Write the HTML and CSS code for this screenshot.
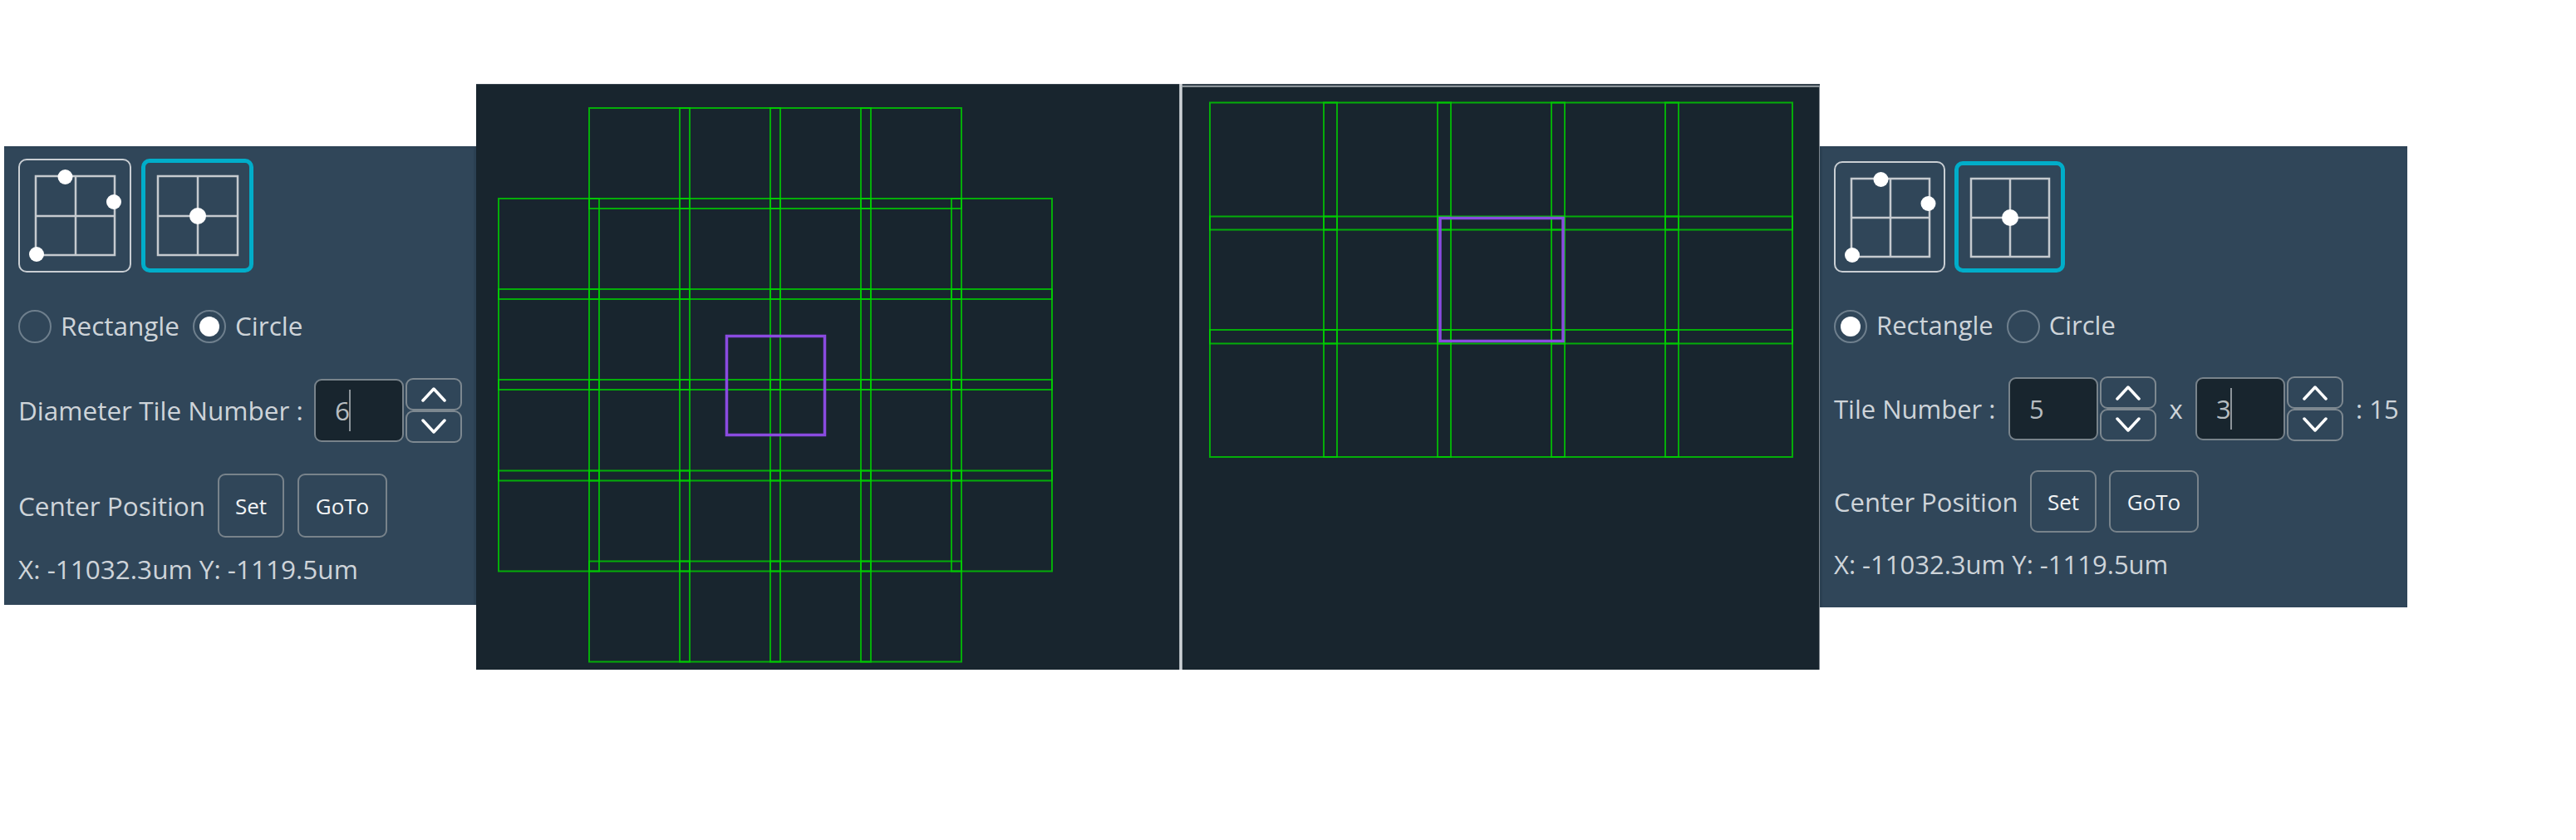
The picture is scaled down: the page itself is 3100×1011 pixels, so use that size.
FILE: index.html
```html
<!DOCTYPE html>
<html lang="en">
<head>
<meta charset="utf-8">
<title>Tile scan</title>
<link rel="stylesheet" href="styles.css">
</head>
<body>
<div class="stage">
  <section class="panel panel-a">
    <div class="icons">
      <div class="icon-btn">
        <svg viewBox="0 0 136 137"><g class="g"><rect x="21" y="21" width="95" height="95"/><path d="M69 21V116M21 69H116"/></g><circle cx="56.500" cy="22" r="9"/><circle cx="115" cy="52" r="9"/><circle cx="22" cy="115" r="9"/></svg>
      </div>
      <div class="icon-btn on">
        <svg viewBox="0 0 135 137"><g class="g"><rect x="20" y="21" width="96" height="95"/><path d="M68 21V116M20 69H116"/></g><circle cx="68" cy="69" r="10"/></svg>
      </div>
    </div>
    <div class="radios">
      <span class="radio"></span><span class="radio-text">Rectangle</span>
      <span class="radio on"></span><span class="radio-text">Circle</span>
    </div>
    <div class="spin-row">
      <span class="label">Diameter Tile Number :</span>
      <div class="num"><span>6</span><i class="caret"></i></div>
      <div class="spin">
        <div class="step"><svg viewBox="0 0 30 19"><path d="M2 17 15 3 28 17"/></svg></div>
        <div class="step"><svg viewBox="0 0 30 19"><path d="M2 2 15 16 28 2"/></svg></div>
      </div>
    </div>
    <div class="pos-row">
      <span class="label">Center Position</span>
      <div class="btn set">Set</div>
      <div class="btn goto">GoTo</div>
    </div>
    <div class="coords">X: -11032.3um Y: -1119.5um</div>
  </section>

  <div class="view view-a">
    <svg viewBox="573 101 846 705">
      <g class="tiles">
        <rect x="709" y="130" width="121" height="121"/><rect x="818" y="130" width="121" height="121"/><rect x="927" y="130" width="121" height="121"/><rect x="1036" y="130" width="121" height="121"/>
        <rect x="600" y="239" width="121" height="121"/><rect x="709" y="239" width="121" height="121"/><rect x="818" y="239" width="121" height="121"/><rect x="927" y="239" width="121" height="121"/><rect x="1036" y="239" width="121" height="121"/><rect x="1145" y="239" width="121" height="121"/>
        <rect x="600" y="348" width="121" height="121"/><rect x="709" y="348" width="121" height="121"/><rect x="818" y="348" width="121" height="121"/><rect x="927" y="348" width="121" height="121"/><rect x="1036" y="348" width="121" height="121"/><rect x="1145" y="348" width="121" height="121"/>
        <rect x="600" y="457" width="121" height="121.500"/><rect x="709" y="457" width="121" height="121.500"/><rect x="818" y="457" width="121" height="121.500"/><rect x="927" y="457" width="121" height="121.500"/><rect x="1036" y="457" width="121" height="121.500"/><rect x="1145" y="457" width="121" height="121.500"/>
        <rect x="600" y="566.500" width="121" height="121"/><rect x="709" y="566.500" width="121" height="121"/><rect x="818" y="566.500" width="121" height="121"/><rect x="927" y="566.500" width="121" height="121"/><rect x="1036" y="566.500" width="121" height="121"/><rect x="1145" y="566.500" width="121" height="121"/>
        <rect x="709" y="675.500" width="121" height="121"/><rect x="818" y="675.500" width="121" height="121"/><rect x="927" y="675.500" width="121" height="121"/><rect x="1036" y="675.500" width="121" height="121"/>
      </g>
      <rect class="cur" x="874.500" y="404.500" width="118" height="119"/>
    </svg>
  </div>
  <div class="splitter"></div>
  <div class="view view-b">
    <svg viewBox="1423 101 767 705">
      <g class="tiles">
        <rect x="1456" y="123.500" width="153" height="153"/><rect x="1593" y="123.500" width="153" height="153"/><rect x="1730" y="123.500" width="153" height="153"/><rect x="1867" y="123.500" width="153" height="153"/><rect x="2004" y="123.500" width="153" height="153"/>
        <rect x="1456" y="260.500" width="153" height="153"/><rect x="1593" y="260.500" width="153" height="153"/><rect x="1730" y="260.500" width="153" height="153"/><rect x="1867" y="260.500" width="153" height="153"/><rect x="2004" y="260.500" width="153" height="153"/>
        <rect x="1456" y="397" width="153" height="153"/><rect x="1593" y="397" width="153" height="153"/><rect x="1730" y="397" width="153" height="153"/><rect x="1867" y="397" width="153" height="153"/><rect x="2004" y="397" width="153" height="153"/>
      </g>
      <rect class="cur" x="1733" y="262.500" width="148" height="148"/>
    </svg>
  </div>

  <section class="panel panel-b">
    <div class="icons">
      <div class="icon-btn">
        <svg viewBox="0 0 134 134"><g class="g"><rect x="21" y="21" width="94" height="94"/><path d="M68 21V115M21 68H115"/></g><circle cx="56.500" cy="22" r="9"/><circle cx="113.500" cy="51" r="9"/><circle cx="22" cy="113" r="9"/></svg>
      </div>
      <div class="icon-btn on">
        <svg viewBox="0 0 133 134"><g class="g"><rect x="20" y="21" width="94" height="94"/><path d="M67 21V115M20 68H114"/></g><circle cx="67" cy="68" r="10"/></svg>
      </div>
    </div>
    <div class="radios">
      <span class="radio on"></span><span class="radio-text">Rectangle</span>
      <span class="radio"></span><span class="radio-text">Circle</span>
    </div>
    <div class="spin-row">
      <span class="label">Tile Number :</span>
      <div class="num"><span>5</span></div>
      <div class="spin">
        <div class="step"><svg viewBox="0 0 30 19"><path d="M2 17 15 3 28 17"/></svg></div>
        <div class="step"><svg viewBox="0 0 30 19"><path d="M2 2 15 16 28 2"/></svg></div>
      </div>
      <span class="times">x</span>
      <div class="num"><span>3</span><i class="caret"></i></div>
      <div class="spin">
        <div class="step"><svg viewBox="0 0 30 19"><path d="M2 17 15 3 28 17"/></svg></div>
        <div class="step"><svg viewBox="0 0 30 19"><path d="M2 2 15 16 28 2"/></svg></div>
      </div>
      <span class="total">: 15</span>
    </div>
    <div class="pos-row">
      <span class="label">Center Position</span>
      <div class="btn set">Set</div>
      <div class="btn goto">GoTo</div>
    </div>
    <div class="coords">X: -11032.3um Y: -1119.5um</div>
  </section>
</div>
</body>
</html>
```

FILE: styles.css
```css
* { box-sizing: border-box; }
html, body { margin: 0; height: 100%; background: #fff; overflow: hidden; }
body { font-family: "Open Sans", "Noto Sans", sans-serif; color: #ced4d9; }

.stage { display: flex; align-items: flex-start; padding: 101px 0 0 5px; }

.panel {
  flex: none;
  background: #304659;
  margin-top: 75px;
  border-top: 3px solid #2e4356;
}
.panel-a { width: 568px; height: 552px; padding: 12px 0 0 17px; border-right: 3px solid #2b4052; font-size: 31.500px; }
.panel-b { width: 707px; height: 555px; padding: 15px 0 0 14px; border-left: 3px solid #2b4052; font-size: 31px; }

.icons { display: flex; gap: 12px; }
.panel-b .icons { gap: 11px; }
.icon-btn { width: 136px; height: 137px; border: 2px solid #c9ced3; border-radius: 10px; position: relative; }
.panel-b .icon-btn { width: 134px; height: 134px; }
.panel-b .icon-btn.on { width: 133px; }
.icon-btn.on { width: 135px; border: 5px solid #00adc9; }
.icon-btn svg { position: absolute; left: -2px; top: -2px; width: 136px; height: 137px; }
.panel-b .icon-btn svg { width: 134px; height: 134px; }
.panel-b .icon-btn.on svg { width: 133px; left: -5px; top: -5px; }
.icon-btn.on svg { left: -5px; top: -5px; width: 135px; }
.icon-btn circle { fill: #fff; }
.icon-btn .g rect, .icon-btn .g path { fill: none; stroke: #c5cacf; stroke-width: 2.500; }

.radios { display: flex; align-items: center; margin-top: 44px; height: 41px; }
.radio { flex: none; width: 40px; height: 40px; border: 2px solid #6e7f8d; border-radius: 50%; display: flex; align-items: center; justify-content: center; }
.radio.on::after { content: ""; width: 24px; height: 24px; border-radius: 50%; background: #fff; }
.radio-text { margin: -2px 16px 0 11px; line-height: 41px; white-space: nowrap; }

.spin-row { display: flex; align-items: center; margin-top: 42px; height: 77px; }
.panel-b .spin-row { margin-top: 40px; }
.label { flex: none; white-space: nowrap; }
.spin-row .label { width: 356px; }
.panel-b .spin-row .label { width: 210px; }

.num {
  flex: none; width: 108px; height: 76px; margin-right: 2px;
  display: flex; align-items: center; padding-left: 23px;
  background: #18252e; border: 2px solid #78838b; border-radius: 9px; color: #b6bcc0;
}
.caret { width: 2px; height: 50px; background: #8d959b; margin-left: -1px; }
.spin { flex: none; width: 68px; height: 78px; display: flex; flex-direction: column; }
.step { flex: 1; border: 2px solid #7d8890; border-radius: 9px; display: flex; align-items: center; justify-content: center; }
.step svg { width: 30px; height: 19px; }
.step path { fill: none; stroke: #fff; stroke-width: 3.500; stroke-linecap: round; stroke-linejoin: round; }
.times { flex: none; width: 47px; text-align: center; }
.total { flex: none; margin-left: 15px; }

.pos-row { display: flex; align-items: center; gap: 16px; margin-top: 38px; }
.panel-b .pos-row { margin-top: 36px; gap: 15px; }
.pos-row .label { width: 224px; }
.panel-b .pos-row .label { width: 221px; }
.btn { flex: none; height: 77px; border: 2px solid #78838b; border-radius: 9px; display: flex; align-items: center; justify-content: center; color: #f2f4f5; font-size: 26px; }
.panel-b .btn { height: 75px; }
.set { width: 80px; }
.goto { width: 108px; }

.coords { margin-top: 18px; line-height: 40px; white-space: nowrap; }

.view { flex: none; height: 705px; background: #18252e; }
.view svg { display: block; width: 100%; height: 100%; }
.view-a { width: 846px; box-shadow: inset 0 1px 0 #38444f; }
.view-b { width: 767px; box-shadow: inset 0 2px 0 #37444f, inset 0 4px 0 #8a9298, inset -1px 0 0 #7d868d; }
.splitter { flex: none; width: 4px; height: 705px; background: linear-gradient(90deg, #8f989f, #ccd1d5, #ccd1d5, #8f989f); }

.tiles rect { fill: none; stroke: #00d000; stroke-width: 2; stroke-opacity: .8; }
.cur { fill: none; stroke: #8a4be0; stroke-width: 3.500; }
```
